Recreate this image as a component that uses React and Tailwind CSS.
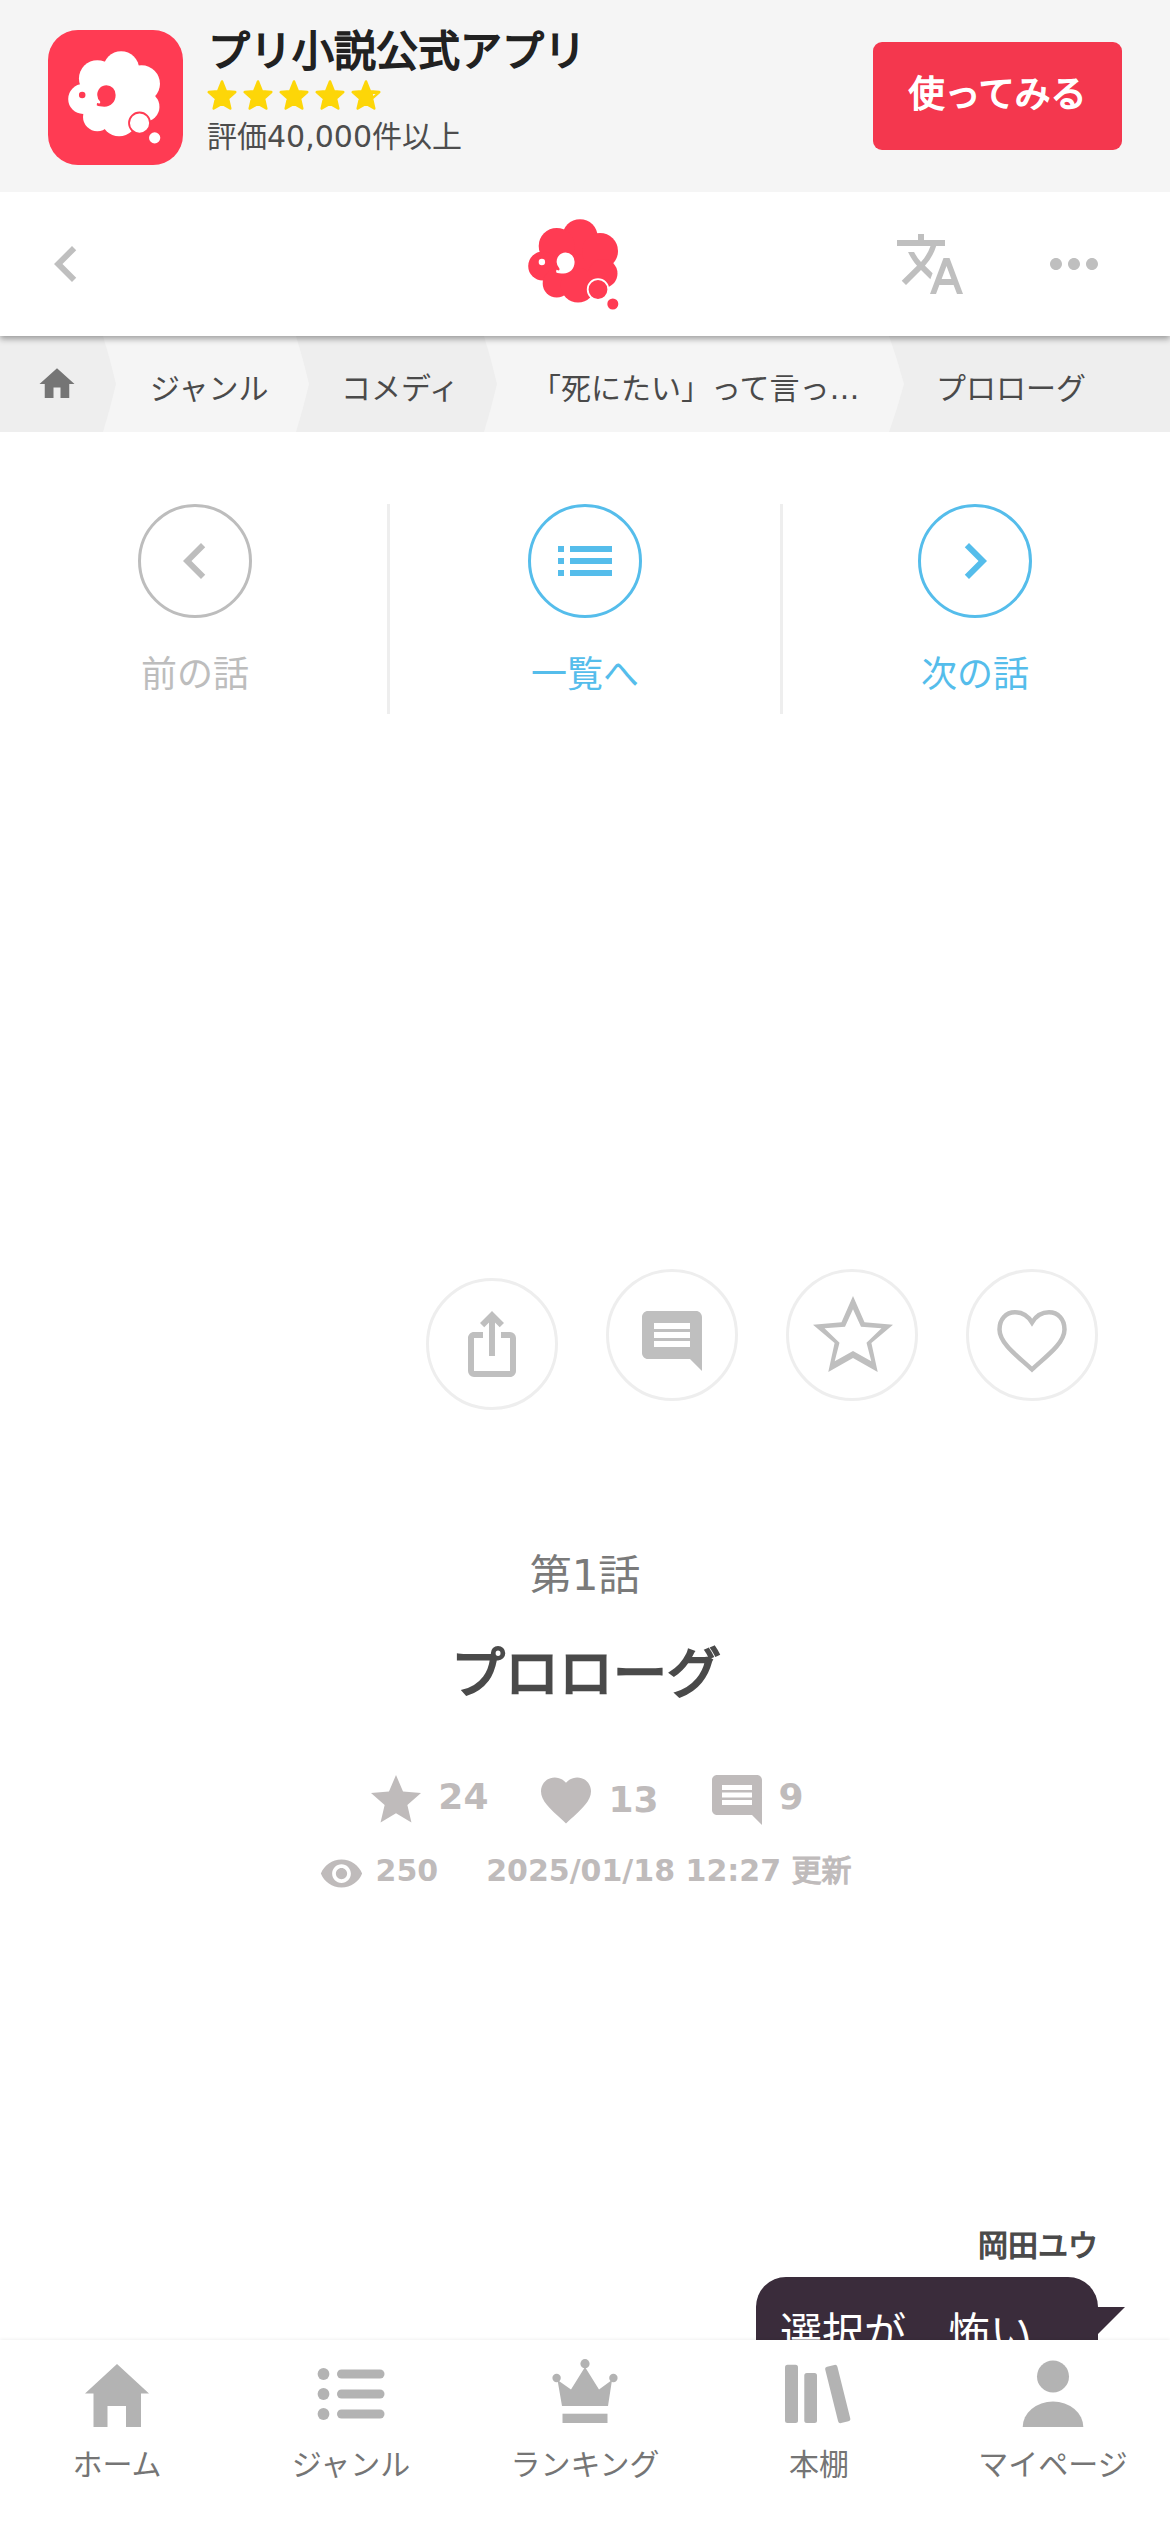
import React from 'react';
import {
  MdChevronLeft,
  MdChevronRight,
  MdComment,
  MdFavorite,
  MdHome,
  MdIosShare,
  MdList,
  MdMoreHoriz,
  MdStar,
  MdTranslate,
  MdVisibility,
} from 'react-icons/md';

// Sheep-cloud mascot, used in the banner and in the header
function SheepLogo({ className, color, background }) {
  return (
    <svg className={className} viewBox="0 0 91 91" fill={color}>
      <circle cx="46" cy="43" r="28" />
      <circle cx="52" cy="17.8" r="17.6" />
      <circle cx="28.7" cy="27" r="18" />
      <circle cx="72" cy="32" r="18" />
      <circle cx="14.8" cy="47" r="14.6" />
      <circle cx="75" cy="54.5" r="14.5" />
      <circle cx="28.7" cy="64.5" r="14" />
      <circle cx="50" cy="66.2" r="17.3" />
      <circle cx="13.9" cy="43" r="3.2" fill={background} />
      <path
        d="M37.6 33.5a9 9.4 0 0 1 9 9.6c0 6.5-4.5 11.5-11 11.5-3 0-6-.4-7.5-1.4l.3-2.4 2.3.6c.8-.3 1-1 .7-2a9.3 9.3 0 0 1-2.8-6.3c0-5.5 4-9.6 9-9.6z"
        fill={background}
      />
      <circle cx="70" cy="70.5" r="10.3" stroke={background} strokeWidth="1.8" />
      <circle cx="84.8" cy="85" r="5.5" />
    </svg>
  );
}

const STAR = 'M18 4.5 L21.9 14.3 L31.3 15 L24 21.5 L26.3 31.5 L18 26.7 L9.7 31.5 L12 21.5 L4.7 15 L14.1 14.3 Z';

function Rating() {
  return (
    <div className="flex">
      {[1, 2, 3, 4, 5].map((n) => (
        <svg key={n} className="h-9 w-9" viewBox="0 0 36 36">
          <path d={STAR} fill="#fdd608" stroke="#fdd608" strokeWidth="2.5" strokeLinejoin="round" />
          {n === 5 && <path d="M24.8 17h2.8l-2.3 1.9z" fill="#f5f5f5" />}
        </svg>
      ))}
    </div>
  );
}

function AppBanner() {
  return (
    <div className="flex h-[192px] shrink-0 items-start bg-[#f5f5f5] pl-12 pr-12">
      <div className="mt-[30px] flex h-[135px] w-[135px] items-center justify-center rounded-[30px] bg-[#ff3b53] pr-[3px]">
        <SheepLogo className="h-[93px] w-[93px]" color="#ffffff" background="#ff3b53" />
      </div>
      <div className="ml-6 mt-[22px] flex-1">
        <div className="pl-px text-[42px] leading-[60px] text-[#212121] [-webkit-text-stroke:1.75px_currentColor]">
          プリ小説公式アプリ
        </div>
        <div className="-ml-[3px] -mt-[5px]">
          <Rating />
        </div>
        <div className="text-[30px] leading-[48px] text-[#4d4d4d]">評価40,000件以上</div>
      </div>
      <button className="mt-[42px] h-[108px] w-[249px] rounded-[9px] bg-[#f4374e] pb-[3px] text-[36px] text-white [-webkit-text-stroke:1.5px_currentColor]">
        使ってみる
      </button>
    </div>
  );
}

function Header() {
  return (
    <header className="z-10 flex h-[144px] shrink-0 items-center justify-between bg-white pl-[30px] pr-[60px] text-[#bfbfbf] shadow-[0_3px_6px_rgba(0,0,0,0.35)] [clip-path:inset(0_0_-12px_0)]">
      <div className="w-[498px]">
        <MdChevronLeft className="h-[72px] w-[72px]" />
      </div>
      <SheepLogo className="h-[91px] w-[91px]" color="#ff3b53" background="#ffffff" />
      <div className="flex flex-1 justify-end gap-[72px]">
        <MdTranslate className="h-[72px] w-[72px]" />
        <MdMoreHoriz className="h-[72px] w-[72px]" />
      </div>
    </header>
  );
}

function Arrow({ className, color }) {
  return (
    <svg className={className} viewBox="0 0 14 96" preserveAspectRatio="none" fill={color}>
      <path d="M0 0 Q8 24 14 48 Q8 72 0 96z" />
    </svg>
  );
}

function Breadcrumbs() {
  return (
    <nav className="flex h-24 shrink-0 text-[30px] leading-[106px] text-[#4a4a4a]">
      <div className="w-[103px] bg-[#eeeeee] pl-9 pt-[27px]">
        <MdHome className="h-[42px] w-[42px] text-[#757575]" />
      </div>
      <div className="flex w-[193px] bg-[#f5f5f5]">
        <Arrow className="h-24 w-[13px]" color="#eeeeee" />
        <span className="ml-[34px]">ジャンル</span>
      </div>
      <div className="flex w-[188px] bg-[#eeeeee]">
        <Arrow className="h-24 w-[13px]" color="#f5f5f5" />
        <span className="ml-[32px]">コメディ</span>
      </div>
      <div className="flex w-[405px] bg-[#f5f5f5]">
        <Arrow className="h-24 w-[13px]" color="#eeeeee" />
        <span className="ml-[34px] whitespace-nowrap">「死にたい」って言っ…</span>
      </div>
      <div className="flex flex-1 bg-[#eeeeee]">
        <Arrow className="h-24 w-[15px]" color="#f5f5f5" />
        <span className="ml-[32px]">プロローグ</span>
      </div>
    </nav>
  );
}

function EpisodeLink({ icon: Icon, label, className }) {
  return (
    <div className={`flex flex-col items-center ${className}`}>
      <div className="flex h-[114px] w-[114px] items-center justify-center rounded-full border-[3px] border-current">
        <Icon className="h-[72px] w-[72px]" />
      </div>
      <div className="mt-[30px] text-[36px] leading-[54px]">{label}</div>
    </div>
  );
}

function EpisodeNav() {
  return (
    <div className="mt-[72px] grid h-[210px] shrink-0 grid-cols-3">
      <EpisodeLink icon={MdChevronLeft} label="前の話" className="border-r-[3px] border-[#eeeeee] pl-[3px] text-[#bdbdbd]" />
      <EpisodeLink icon={MdList} label="一覧へ" className="text-[#55bdeb]" />
      <EpisodeLink icon={MdChevronRight} label="次の話" className="border-l-[3px] border-[#eeeeee] pr-[3px] text-[#55bdeb]" />
    </div>
  );
}

function StarOutline({ className }) {
  return (
    <svg className={className} viewBox="0 0 80 76" fill="currentColor" fillRule="evenodd">
      <path d="M40 0 51.5 26.3 80 28.8 58.4 47 64.7 76 40 62 15.3 76 21.6 47 0 28.8 28.5 26.3zM40 13.3 32 30.8 11.5 32.3 26.5 46.8 21.7 65.3 40 55 58.3 65.3 53.5 46.8 68.5 32.3 48 30.8z" />
    </svg>
  );
}

function HeartOutline({ className }) {
  return (
    <svg className={className} viewBox="0 0 72 66" fill="none" stroke="currentColor" strokeWidth="4.5">
      <path d="M36 61.5 C24 50 3.5 36 3.5 21.5 C3.5 11 10 4.3 19 4.3 C26 4.3 32 8 36 14.5 C40 8 46 4.3 53 4.3 C62 4.3 68.5 11 68.5 21.5 C68.5 36 48 50 36 61.5z" />
    </svg>
  );
}

function RoundButton({ className = '', children }) {
  return (
    <button className={`flex h-[132px] w-[132px] items-center justify-center rounded-full border-[3px] border-[#eeeeee] text-[#bfbfbf] ${className}`}>
      {children}
    </button>
  );
}

function Actions() {
  return (
    <div className="mt-[555px] flex shrink-0 items-start justify-end gap-12 pr-[72px]">
      <RoundButton className="mt-[9px]">
        <MdIosShare className="h-[72px] w-[72px]" />
      </RoundButton>
      <RoundButton className="pt-3">
        <MdComment className="h-[72px] w-[72px]" />
      </RoundButton>
      <RoundButton className="pb-[2px] pl-[2px]">
        <StarOutline className="h-[76px] w-20" />
      </RoundButton>
      <RoundButton className="pt-3">
        <HeartOutline className="h-[66px] w-[72px]" />
      </RoundButton>
    </div>
  );
}

function EpisodeInfo() {
  return (
    <section className="mt-[136px] flex shrink-0 flex-col items-center">
      <div className="text-[42px] leading-[60px] text-[#7a7a7a]">第1話</div>
      <h1 className="mt-[33px] pl-[2px] text-[54px] leading-[72px] text-[#4a4a4a] [-webkit-text-stroke:2.25px_currentColor]">
        プロローグ
      </h1>
      <div className="mt-[59px] flex h-[60px] gap-12 text-[36px] font-bold text-[#bfbbbb]">
        <div className="flex gap-3">
          <MdStar className="h-[60px] w-[60px]" />
          <span className="leading-[54px]">24</span>
        </div>
        <div className="flex gap-3">
          <MdFavorite className="h-[60px] w-[60px]" />
          <span className="leading-[60px]">13</span>
        </div>
        <div className="flex gap-3">
          <MdComment className="h-[60px] w-[60px]" />
          <span className="leading-[54px]">9</span>
        </div>
      </div>
      <div className="mt-[21px] flex h-[45px] text-[30px] font-bold leading-[39px] text-[#bfbbbb]">
        <MdVisibility className="h-[45px] w-[45px]" />
        <span className="ml-3">250</span>
        <span className="ml-12">
          2025/01/18 12:27 <span className="font-normal [-webkit-text-stroke:1.25px_currentColor]">更新</span>
        </span>
      </div>
    </section>
  );
}

function ChatLine() {
  return (
    <div className="mt-[327px] flex shrink-0 flex-col items-end pr-[72px]">
      <div className="pl-px text-[30px] leading-[45px] text-[#4a4a4a] [-webkit-text-stroke:1.25px_currentColor]">岡田ユウ</div>
      <div className="relative mt-[9px] h-[120px] w-[342px] rounded-[30px] bg-[#3a2c3b] px-6 pt-[25px] text-[42px] leading-[63px] text-white">
        選択が　怖い
        <svg className="absolute left-full top-[30px] h-[27px] w-[27px]" viewBox="0 0 27 27" fill="#3a2c3b">
          <path d="M0 0H27L0 27z" />
        </svg>
      </div>
    </div>
  );
}

const TABS = [
  {
    label: 'ホーム',
    icon: <path d="M36 6 68 35.5H60V69H45V48H26.5V69H12.5V35.5H4z" />,
  },
  {
    label: 'ジャンル',
    icon: (
      <>
        {[16, 36, 56].map((y) => (
          <g key={y}>
            <circle cx="8.5" cy={y} r="5.9" />
            <rect x="22" y={y - 4.5} width="47.5" height="9" rx="4.5" />
          </g>
        ))}
      </>
    ),
  },
  {
    label: 'ランキング',
    icon: (
      <>
        <circle cx="7.6" cy="20" r="4.2" />
        <circle cx="36" cy="5.7" r="4.6" />
        <circle cx="64.4" cy="20" r="4.2" />
        <path d="M8.5 22 22 31.5 36 9 50 31.5 63 22 59 48H13z" />
        <rect x="13.5" y="55.7" width="45" height="9.3" />
      </>
    ),
  },
  {
    label: '本棚',
    icon: (
      <>
        <rect x="2" y="6.7" width="13" height="58.3" rx="2.5" />
        <rect x="21.3" y="15" width="12.7" height="50" rx="2.5" />
        <rect x="48.500" y="7" width="12.5" height="58" rx="2.5" transform="rotate(-14 54.800 36)" />
      </>
    ),
  },
  {
    label: 'マイページ',
    icon: (
      <>
        <circle cx="36" cy="18.5" r="16" />
        <path d="M5.7 69a30.3 25.5 0 0 1 60.6 0z" />
      </>
    ),
  },
];

function TabBar() {
  return (
    <nav className="z-10 grid h-48 shrink-0 grid-cols-5 bg-white pt-[18px] shadow-[0_-1px_3px_rgba(0,0,0,0.06)]">
      {TABS.map((tab) => (
        <div key={tab.label} className="flex flex-col items-center">
          <svg className="h-[72px] w-[72px]" viewBox="0 0 72 72" fill="#b3b3b3">
            {tab.icon}
          </svg>
          <span className="mt-3 text-[30px] leading-[45px] text-[#757575]">{tab.label}</span>
        </div>
      ))}
    </nav>
  );
}

export default function App() {
  return (
    <div
      lang="ja"
      className="flex h-[2532px] w-[1170px] flex-col overflow-hidden bg-white font-['DejaVu_Sans','Noto_Sans_CJK_JP',sans-serif]"
    >
      <AppBanner />
      <Header />
      <Breadcrumbs />
      <main className="flex min-h-0 flex-1 flex-col overflow-hidden">
        <EpisodeNav />
        <Actions />
        <EpisodeInfo />
        <ChatLine />
      </main>
      <TabBar />
    </div>
  );
}
